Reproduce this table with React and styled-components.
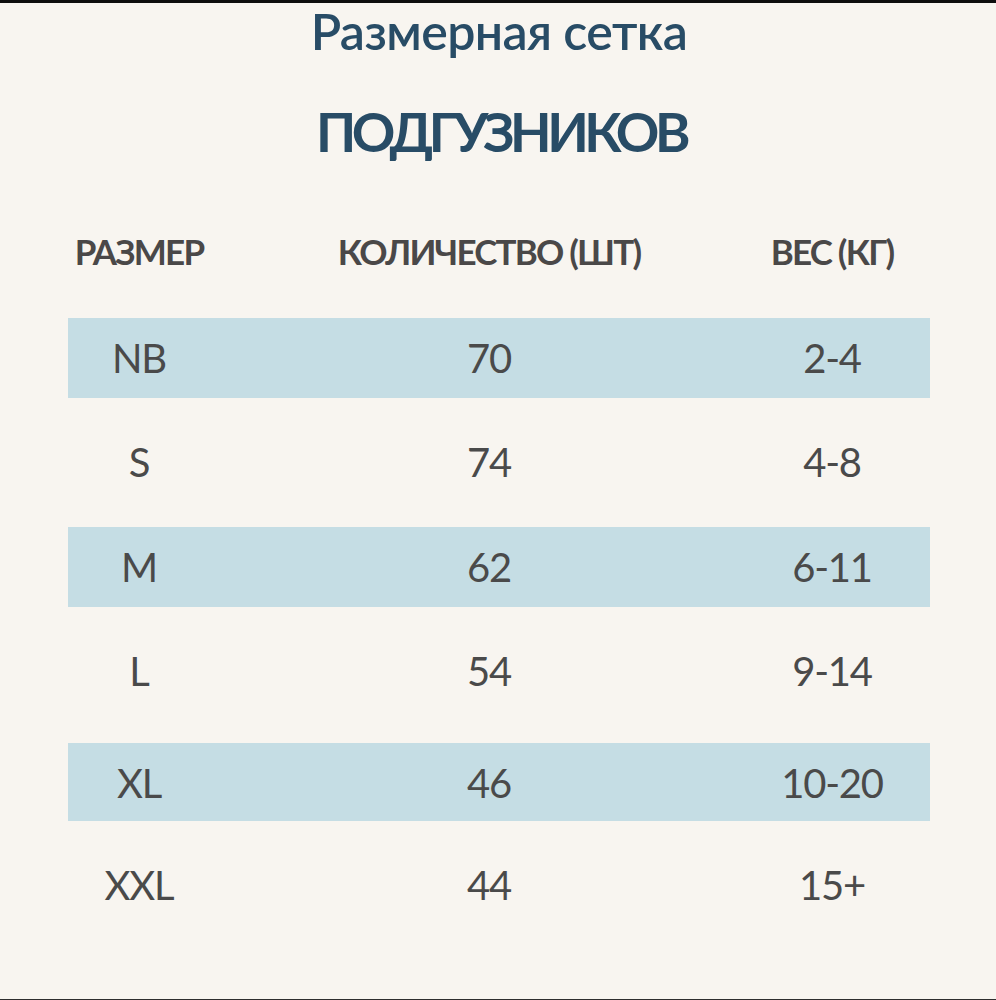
import React from "react";
import styled, { createGlobalStyle } from "styled-components";

const Global = createGlobalStyle`
  html, body { margin: 0; padding: 0; background: #f8f5f0; }
  * { box-sizing: border-box; }
`;

const Page = styled.div`
  width: 996px;
  height: 1000px;
  background: #f8f5f0;
  border-top: 3px solid #0e0e0e;
  border-bottom: 1px solid #2e2e2e;
  font-family: Lato, "Open Sans", "Liberation Sans", sans-serif;
  display: flex;
  flex-direction: column;
  align-items: stretch;
`;

const Title = styled.h1`
  margin: 0;
  text-align: center;
  font-family: Lato, "Noto Sans", sans-serif;
  font-weight: 600;
  font-size: 50px;
  line-height: 56px;
  color: #284c66;
  letter-spacing: -0.6px;
  padding-left: 2px;
`;

const Subtitle = styled.h2`
  margin: 39px 0 0;
  text-align: center;
  font-family: Lato, "Noto Sans", sans-serif;
  font-weight: 700;
  font-size: 54px;
  line-height: 67px;
  color: #284c66;
  letter-spacing: -4.5px;
  padding-left: 6px;
`;

const Table = styled.div`
  margin: 46px 0 0 68px;
  width: 862px;
  display: flex;
  flex-direction: column;
  gap: 24.5px;
`;

const Row = styled.div`
  display: grid;
  grid-template-columns: 142px 558px 128px;
  align-items: center;
  height: ${(p) => p.$h || 80}px;
  margin-top: ${(p) => p.$shift || 0}px;
  background: ${(p) => (p.$band ? "#c5dde4" : "transparent")};
`;

const HeadRow = styled(Row)`
  margin-bottom: 2px;
`;

const HeadCell = styled.div`
  text-align: center;
  font-family: Lato, "Open Sans", sans-serif;
  font-weight: 700;
  font-size: 35px;
  line-height: 80px;
  color: #4a4848;
  letter-spacing: -1.8px;
  white-space: nowrap;
`;

const Cell = styled.div`
  text-align: center;
  font-family: Lato, "Open Sans", sans-serif;
  font-weight: 400;
  font-size: 40px;
  line-height: 80px;
  color: #4a4a4a;
  letter-spacing: -1.2px;
  white-space: nowrap;
`;

const rows = [
  { size: "NB", qty: "70", w: "2-4", band: true },
  { size: "S", qty: "74", w: "4-8" },
  { size: "M", qty: "62", w: "6-11", band: true },
  { size: "L", qty: "54", w: "9-14" },
  { size: "XL", qty: "46", w: "10-20", band: true, shift: 7, h: 78 },
  { size: "XXL", qty: "44", w: "15+" },
];

export default function App() {
  return (
    <>
      <Global />
      <Page>
        <Title>Размерная сетка</Title>
        <Subtitle>ПОДГУЗНИКОВ</Subtitle>
        <Table>
          <HeadRow>
            <HeadCell>РАЗМЕР</HeadCell>
            <HeadCell>КОЛИЧЕСТВО (ШТ)</HeadCell>
            <HeadCell>ВЕС (КГ)</HeadCell>
          </HeadRow>
          {rows.map((r) => (
            <Row key={r.size} $band={r.band} $shift={r.shift} $h={r.h}>
              <Cell>{r.size}</Cell>
              <Cell>{r.qty}</Cell>
              <Cell>{r.w}</Cell>
            </Row>
          ))}
        </Table>
      </Page>
    </>
  );
}
